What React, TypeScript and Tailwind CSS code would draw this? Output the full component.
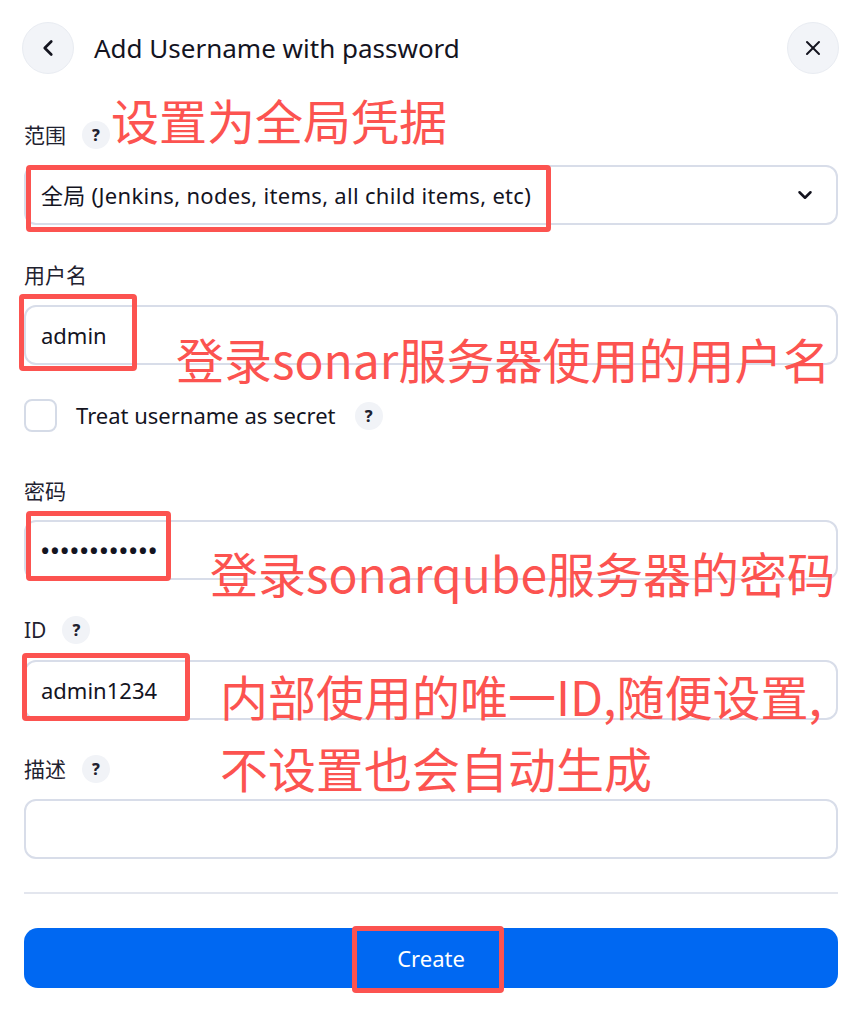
import { ChevronDown, ChevronLeft, X } from "lucide-react";

const font = { fontFamily: '"Noto Sans", "Noto Sans CJK SC", sans-serif' };

function Help() {
  return (
    <span className="inline-flex h-[28px] w-[28px] items-center justify-center rounded-full bg-[#f1f3f7] text-[16px] font-extrabold text-[#1f2230]">
      ?
    </span>
  );
}

function Label({ text, help }: { text: string; help?: boolean }) {
  return (
    <div className="flex h-[28px] items-center gap-[16px] text-[21px] leading-[28px] text-[#1f2230]">
      <span>{text}</span>
      {help && <Help />}
    </div>
  );
}

function Field({ value, className = "" }: { value?: string; className?: string }) {
  return (
    <div className={"flex h-[60px] items-center rounded-[12px] border-2 border-[#d8dde9] bg-white px-[15px] text-[22px] text-[#14141f] " + className}>
      {value}
    </div>
  );
}

// red annotation overlays drawn on top of the form
function Box({ className }: { className: string }) {
  return <div className={"pointer-events-none absolute rounded-[4px] border-[5px] border-[#fc5350] " + className} />;
}

function Note({ className, children }: { className: string; children: React.ReactNode }) {
  return (
    <div className={"pointer-events-none absolute whitespace-nowrap text-[48px] text-[#fc5350] " + className} style={{ fontFamily: '"Noto Sans CJK SC", sans-serif' }}>
      {children}
    </div>
  );
}

export default function App() {
  return (
    <div className="relative h-[1014px] w-[854px] overflow-hidden bg-white pl-[24px] pr-[16px]" style={font}>
      <div className="flex h-[96px] items-center justify-between">
        <div className="flex items-center gap-[20px]">
          <button className="-ml-[2px] flex h-[52px] w-[52px] items-center justify-center rounded-full border border-[#e9ecf2] bg-[#f2f4f8]">
            <ChevronLeft size={26} strokeWidth={2.5} className="text-[#14141f]" />
          </button>
          <h1 className="text-[26px] text-[#14141f]">Add Username with password</h1>
        </div>
        <button className="-mr-[1px] flex h-[52px] w-[52px] items-center justify-center rounded-full border border-[#e9ecf2] bg-[#f2f4f8]">
          <X size={24} strokeWidth={2} className="text-[#14141f]" />
        </button>
      </div>

      <div className="mt-[25px]">
        <Label text="范围" help />
      </div>
      <div className="mt-[16px] flex h-[60px] items-center justify-between rounded-[12px] border-2 border-[#d8dde9] px-[15px] text-[22px] text-[#14141f]">
        <span className="tracking-[0.3px]">全局 (Jenkins, nodes, items, all child items, etc)</span>
        <ChevronDown size={22} strokeWidth={2.75} className="mr-[5px] text-[#14141f]" />
      </div>

      <div className="mt-[36px]">
        <Label text="用户名" />
      </div>
      <div className="mt-[16px]">
        <Field value="admin" />
      </div>

      <div className="mt-[34px] flex h-[33px] items-center gap-[19px]">
        <span className="h-[33px] w-[33px] rounded-[8px] border-2 border-[#d5dbe7]" />
        <span className="text-[22px] text-[#14141f]">Treat username as secret</span>
        <Help />
      </div>

      <div className="mt-[45px]">
        <Label text="密码" />
      </div>
      <div className="mt-[15px]">
        <Field value="••••••••••••" className="font-bold tracking-[1.5px]" />
      </div>

      <div className="mt-[36px]">
        <Label text="ID" help />
      </div>
      <div className="mt-[16px]">
        <Field value="admin1234" />
      </div>

      <div className="mt-[35px]">
        <Label text="描述" help />
      </div>
      <div className="mt-[16px]">
        <Field />
      </div>

      <div className="mt-[33px] h-[2px] bg-[#e3e6ee]" />

      <button className="mt-[34px] flex h-[60px] w-full items-center justify-center rounded-[14px] bg-[#0068f2] text-[22px] text-white">
        Create
      </button>

      <Box className="left-[26px] top-[165px] h-[67px] w-[525px]" />
      <Box className="left-[19px] top-[294px] h-[77px] w-[118px]" />
      <Box className="left-[26px] top-[511px] h-[70px] w-[145px]" />
      <Box className="left-[22px] top-[653px] h-[68px] w-[168px]" />
      <Box className="left-[352px] top-[926px] h-[67px] w-[152px]" />

      <Note className="left-[111px] top-[89px] leading-[60px]">设置为全局凭据</Note>
      <Note className="left-[176px] top-[328px] leading-[60px]">登录sonar服务器使用的用户名</Note>
      <Note className="left-[210px] top-[542px] leading-[60px]">登录sonarqube服务器的密码</Note>
      <Note className="left-[220px] top-[659px] leading-[72px]">
        内部使用的唯一ID,随便设置,
        <br />
        不设置也会自动生成
      </Note>
    </div>
  );
}
